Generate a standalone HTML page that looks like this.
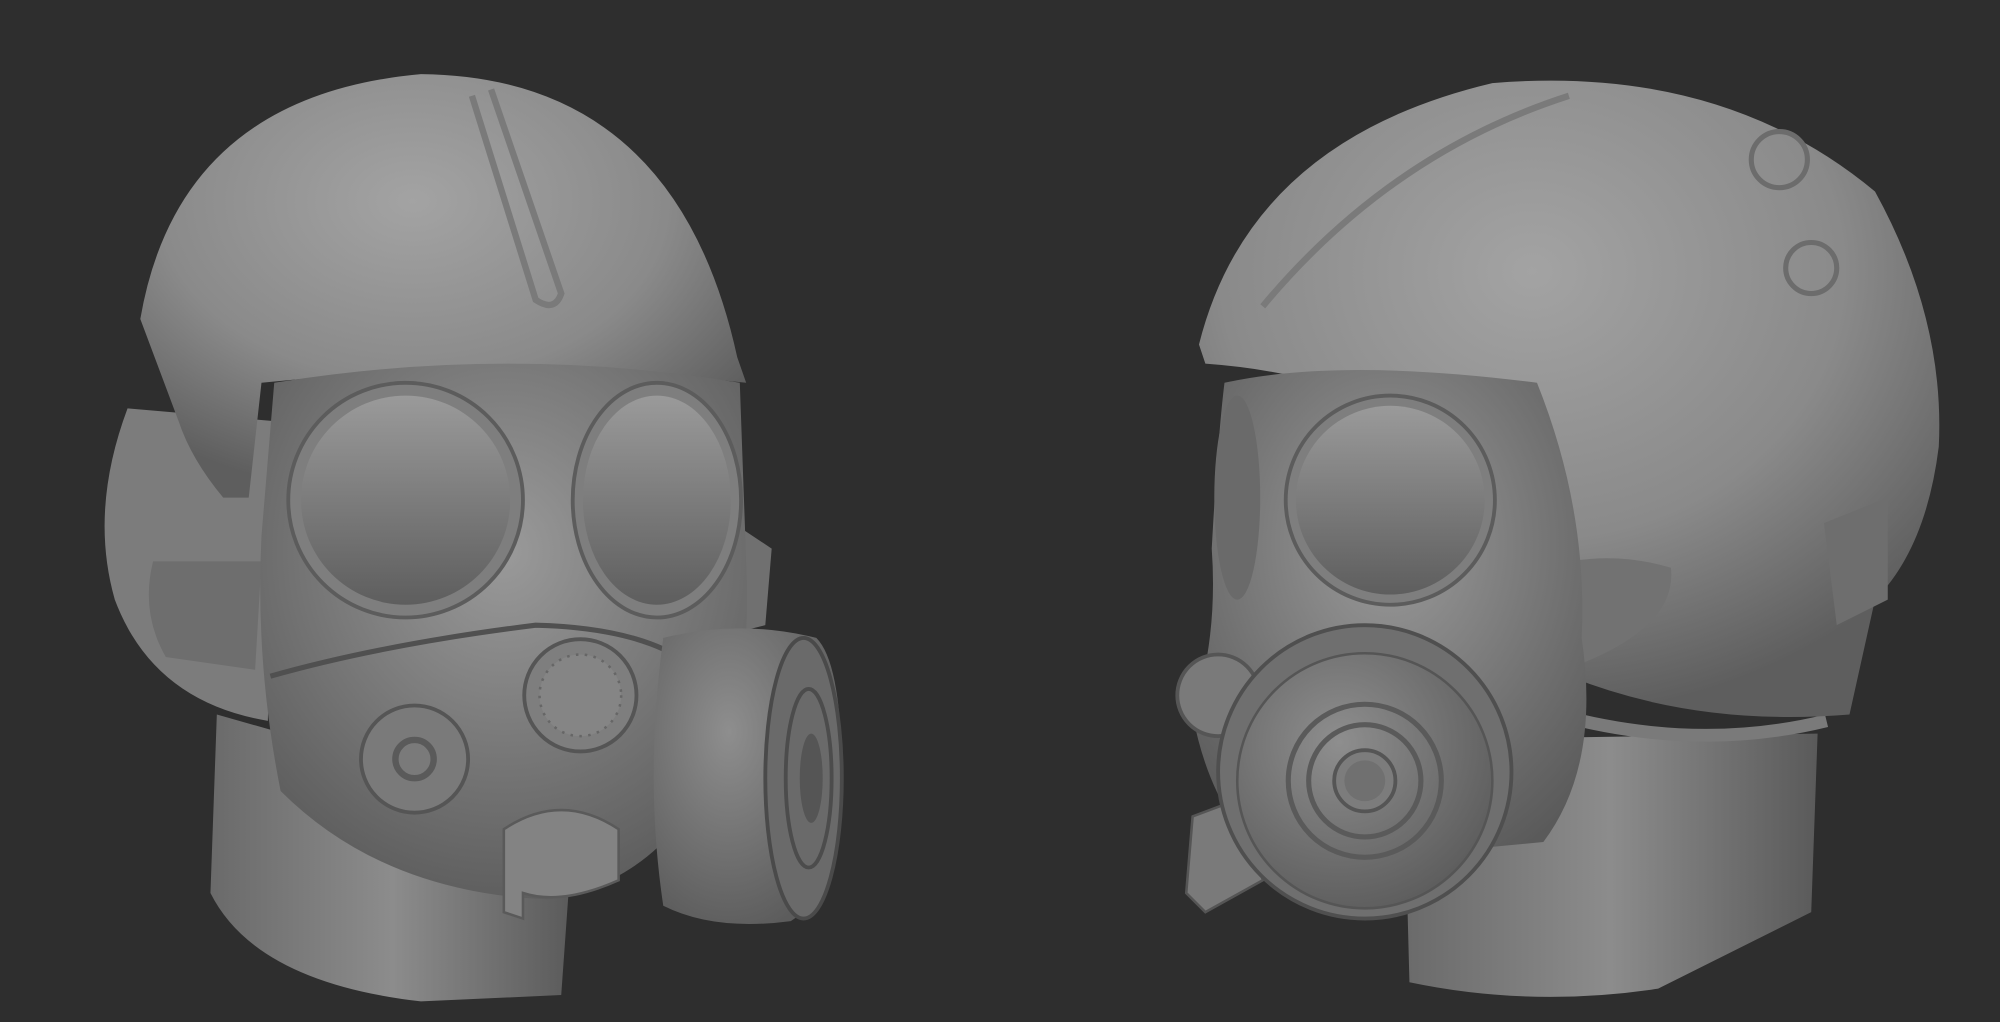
<!DOCTYPE html>
<html><head><style>html,body{margin:0;padding:0;background:#2e2e2e;width:2000px;height:1022px;overflow:hidden}svg{display:block}</style></head>
<body>
<svg width="2000" height="1022" viewBox="0 0 1568 801" xmlns="http://www.w3.org/2000/svg">
<defs>
<radialGradient id="hel" cx="0.45" cy="0.3" r="0.7"><stop offset="0" stop-color="#a3a3a3"/><stop offset="0.6" stop-color="#8a8a8a"/><stop offset="1" stop-color="#5e5e5e"/></radialGradient>
<radialGradient id="face" cx="0.5" cy="0.35" r="0.7"><stop offset="0" stop-color="#9a9a9a"/><stop offset="1" stop-color="#5a5a5a"/></radialGradient>
<linearGradient id="lens" x1="0" y1="0" x2="0" y2="1"><stop offset="0" stop-color="#9a9a9a"/><stop offset="1" stop-color="#5e5e5e"/></linearGradient>
<linearGradient id="neck" x1="0" y1="0" x2="1" y2="0"><stop offset="0" stop-color="#6a6a6a"/><stop offset="0.5" stop-color="#8c8c8c"/><stop offset="1" stop-color="#5a5a5a"/></linearGradient>
<radialGradient id="can" cx="0.4" cy="0.35" r="0.7"><stop offset="0" stop-color="#8e8e8e"/><stop offset="1" stop-color="#5c5c5c"/></radialGradient>
</defs>
<rect width="1568" height="801" fill="#2e2e2e"/>

<!-- LEFT HEAD -->
<path d="M170 560 L165 700 Q200 770 330 785 L440 780 L450 640 Z" fill="url(#neck)"/>
<path d="M100 320 Q70 400 90 470 Q120 550 210 565 L215 330 Z" fill="#7c7c7c"/>
<path d="M110 250 Q140 75 330 58 Q530 60 578 280 L585 300 Q400 280 205 300 L195 390 L175 390 Q150 360 140 330 Z" fill="url(#hel)"/>
<path d="M120 440 Q110 480 130 515 L200 525 L205 440 Z" fill="#6e6e6e"/>
<path d="M560 400 L605 430 L600 490 L560 500 Z" fill="#707070"/>
<path d="M215 300 Q400 270 580 300 L585 440 Q590 540 560 600 Q520 690 430 705 Q300 700 220 620 Q200 520 205 420 Z" fill="url(#face)"/>
<circle cx="318" cy="392" r="92" fill="#7e7e7e" stroke="#5c5c5c" stroke-width="3"/>
<circle cx="318" cy="392" r="82" fill="url(#lens)"/>
<ellipse cx="515" cy="392" rx="66" ry="92" fill="#7e7e7e" stroke="#5c5c5c" stroke-width="3"/>
<ellipse cx="515" cy="392" rx="58" ry="82" fill="url(#lens)"/>
<path d="M212 530 Q300 505 420 490 Q500 492 540 520" fill="none" stroke="#505050" stroke-width="4"/>
<circle cx="325" cy="595" r="42" fill="#7a7a7a" stroke="#555" stroke-width="3"/>
<circle cx="325" cy="595" r="15" fill="none" stroke="#5a5a5a" stroke-width="5"/>
<circle cx="455" cy="545" r="44" fill="#7e7e7e" stroke="#555" stroke-width="3"/>
<circle cx="455" cy="545" r="32" fill="#858585" stroke="#666" stroke-width="2" stroke-dasharray="2 5"/>
<path d="M395 650 Q440 620 485 650 L485 690 Q440 710 410 700 L410 720 L395 715 Z" fill="#838383" stroke="#5a5a5a" stroke-width="2"/>
<path d="M520 500 Q580 485 640 500 Q660 520 660 610 Q655 700 620 722 Q560 730 520 710 Q505 610 520 500 Z" fill="url(#can)"/>
<ellipse cx="630" cy="610" rx="30" ry="110" fill="#6a6a6a" stroke="#4a4a4a" stroke-width="3"/>
<ellipse cx="634" cy="610" rx="18" ry="70" fill="none" stroke="#4c4c4c" stroke-width="3"/>
<ellipse cx="636" cy="610" rx="9" ry="35" fill="#555"/>
<path d="M385 70 L440 230 Q435 245 420 235 L370 75" fill="none" stroke="#7a7a7a" stroke-width="5"/>

<!-- RIGHT HEAD -->
<path d="M1100 580 L1105 770 Q1200 790 1300 775 L1420 715 L1425 575 Z" fill="url(#neck)"/>
<path d="M1220 560 Q1330 590 1432 565" fill="none" stroke="#7a7a7a" stroke-width="10"/>
<path d="M940 270 Q980 110 1170 65 Q1350 50 1470 150 Q1525 250 1520 350 Q1510 430 1470 470 L1450 560 Q1330 570 1230 530 L1210 450 Q1150 300 945 285 Z" fill="url(#hel)"/>
<path d="M1210 445 Q1260 430 1310 445 Q1315 490 1240 520 Z" fill="#727272"/>
<path d="M1430 410 L1480 390 L1480 470 L1440 490 Z" fill="#6e6e6e"/>
<path d="M960 300 Q1050 280 1205 300 Q1245 400 1240 500 Q1255 600 1210 660 L1000 680 Q950 640 935 560 Q955 500 950 430 Q955 340 960 300 Z" fill="url(#face)"/>
<ellipse cx="970" cy="390" rx="18" ry="80" fill="#6a6a6a"/>
<circle cx="1090" cy="392" r="82" fill="#7e7e7e" stroke="#5c5c5c" stroke-width="3"/>
<circle cx="1090" cy="392" r="74" fill="url(#lens)"/>
<circle cx="955" cy="545" r="32" fill="#7a7a7a" stroke="#555" stroke-width="3"/>
<path d="M935 640 L975 625 L990 690 L945 715 L930 700 Z" fill="#7a7a7a" stroke="#555" stroke-width="2"/>
<circle cx="1070" cy="605" r="115" fill="#6f6f6f" stroke="#4f4f4f" stroke-width="3"/>
<circle cx="1070" cy="612" r="100" fill="url(#can)" stroke="#555" stroke-width="2"/>
<circle cx="1070" cy="612" r="60" fill="none" stroke="#5a5a5a" stroke-width="4"/>
<circle cx="1070" cy="612" r="44" fill="none" stroke="#5a5a5a" stroke-width="4"/>
<circle cx="1070" cy="612" r="24" fill="#7c7c7c" stroke="#555" stroke-width="3"/>
<circle cx="1070" cy="612" r="16" fill="#707070"/>
<circle cx="1395" cy="125" r="22" fill="none" stroke="#6c6c6c" stroke-width="4"/>
<circle cx="1420" cy="210" r="20" fill="none" stroke="#6c6c6c" stroke-width="4"/>
<path d="M990 240 Q1090 120 1230 75" fill="none" stroke="#7a7a7a" stroke-width="5"/>
</svg>
</body></html>
